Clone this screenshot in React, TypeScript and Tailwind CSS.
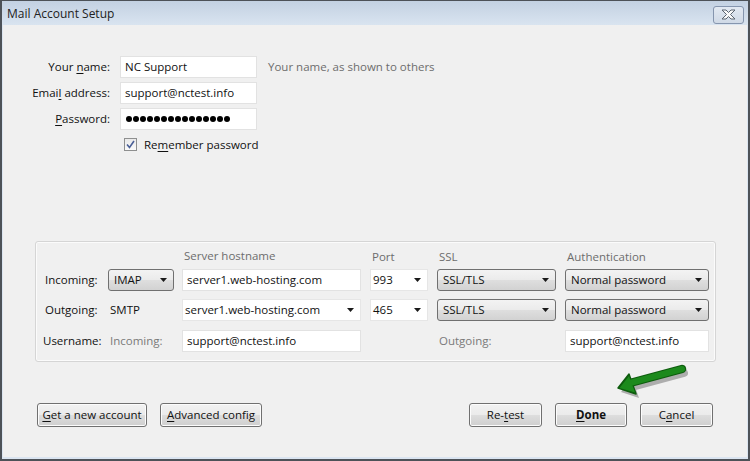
import type { ReactNode } from "react";

const FONT = { fontFamily: '"Open Sans", "Noto Sans", sans-serif' };

function Arrow() {
  return (
    <svg width="7" height="4" viewBox="0 0 7 4" className="shrink-0">
      <path d="M0 0 H7 L3.5 4 Z" fill="#1a1a1a" />
    </svg>
  );
}

function Select({ value, width }: { value: string; width: string }) {
  return (
    <div
      className={`${width} h-[22px] flex items-center justify-between pl-[5px] pr-[6px] rounded-[3px] border border-[#707070] bg-[linear-gradient(#f3f3f3_0%,#ebebeb_48%,#dedede_52%,#d2d2d2_100%)] text-[#111]`}
    >
      <span>{value}</span>
      <Arrow />
    </div>
  );
}

function Combo({ value, width }: { value: string; width: string }) {
  return (
    <div className={`${width} h-[22px] flex items-center justify-between pl-[2px] pr-[6px] bg-white border border-[#e6e6e6] text-[#111]`}>
      <span>{value}</span>
      <Arrow />
    </div>
  );
}

function Input({ children, width }: { children: ReactNode; width: string }) {
  return (
    <div className={`${width} h-[22px] flex items-center px-[4px] bg-white border border-[#e2e2e2] text-[#111]`}>
      {children}
    </div>
  );
}

function Button({ children, width, bold }: { children: ReactNode; width: string; bold?: boolean }) {
  return (
    <div
      className={`${width} h-[24px] flex items-center justify-center rounded-[3px] border border-[#707070] bg-[linear-gradient(#f2f2f2_0%,#ebebeb_48%,#dddddd_52%,#cfcfcf_100%)] shadow-[inset_0_0_0_1px_#fcfcfc] text-[#111] ${bold ? "font-bold" : ""}`}
    >
      {children}
    </div>
  );
}

function U({ children }: { children: ReactNode }) {
  return <span className="underline underline-offset-[2px]">{children}</span>;
}

export default function App() {
  return (
    <div
      style={FONT}
      className="relative w-[750px] h-[461px] flex flex-col text-[11.5px] leading-none border-l-2 border-r-2 border-b-2 border-t border-[#4d5258] bg-[#dbe5f1]"
    >
      {/* title bar */}
      <div className="h-[24px] shrink-0 flex items-center justify-between pl-[5px] pr-[4px] bg-[linear-gradient(#c3d1e2,#d9e4f0)]">
        <span className="text-[12px] text-[#222] pt-[2px]">Mail Account Setup</span>
        <div className="w-[31px] h-[18px] mt-[3px] rounded-[3px] border border-[#8595ae] bg-[linear-gradient(#e2e9f2,#cfd9e6)] flex items-center justify-center">
          <svg width="15" height="11" viewBox="0 0 15 11">
            <path
              d="M1 1 H5 L7.5 3.5 L10 1 H14 L9.5 5.5 L14 10 H10 L7.5 7.5 L5 10 H1 L5.5 5.5 Z"
              fill="#fafafa"
              stroke="#5b6470"
              strokeWidth="1"
              strokeLinejoin="round"
            />
          </svg>
        </div>
      </div>

      {/* content */}
      <div className="flex-1 flex flex-col bg-[#f0f0f0] mx-[1px] mb-[2px]">
        {/* identity fields */}
        <div className="mt-[31px] grid grid-cols-[107px_137px_auto] gap-x-[10px] gap-y-[4px] items-center">
          <div className="text-right text-[#111]">
            Your <U>n</U>ame:
          </div>
          <Input width="w-[137px]">NC Support</Input>
          <div className="text-[#6d6d6d] pl-[1px]">Your name, as shown to others</div>

          <div className="text-right text-[#111]">
            Emai<U>l</U> address:
          </div>
          <Input width="w-[137px]">support@nctest.info</Input>
          <div />

          <div className="text-right text-[#111]">
            <U>P</U>assword:
          </div>
          <Input width="w-[137px]">
            <div className="flex gap-[1px] pl-[1px]">
              {Array.from({ length: 15 }).map((_, i) => (
                <span key={i} className="w-[6px] h-[6px] rounded-full bg-black" />
              ))}
            </div>
          </Input>
          <div />
        </div>

        <div className="mt-[8px] ml-[121px] flex items-center gap-[7px]">
          <div className="w-[13px] h-[13px] border border-[#8e8f8f] bg-[linear-gradient(#e9e9e9,#fafafa)] flex items-center justify-center">
            <svg width="9" height="9" viewBox="0 0 9 9">
              <path d="M1 4.5 L3.5 7.5 L8 1" fill="none" stroke="#4a5f97" strokeWidth="1.6" />
            </svg>
          </div>
          <span className="text-[#111]">
            Re<U>m</U>ember password
          </span>
        </div>

        {/* server settings panel */}
        <div className="mt-[90px] ml-[32px] w-[681px] h-[121px] rounded-[3px] border border-[#d5d5d5] shadow-[inset_0_0_0_1px_#fbfbfb] pl-[7px] pr-[6px] pt-[8px]">
          <div className="grid grid-cols-[65px_74px_188px_67px_128px_144px] items-center">
            <div />
            <div />
            <div className="pl-[2px] text-[#6d6d6d] h-[14px]">Server hostname</div>
            <div className="pl-[2px] text-[#6d6d6d]">Port</div>
            <div className="pl-[2px] text-[#6d6d6d]">SSL</div>
            <div className="pl-[2px] text-[#6d6d6d]">Authentication</div>
          </div>

          <div className="mt-[5px] grid grid-cols-[65px_74px_188px_67px_128px_144px] items-center">
            <div className="pl-[2px] text-[#111]">Incoming:</div>
            <Select value="IMAP" width="w-[66px]" />
            <Input width="w-[179px]">server1.web-hosting.com</Input>
            <Combo value="993" width="w-[58px]" />
            <Select value="SSL/TLS" width="w-[119px]" />
            <Select value="Normal password" width="w-[144px]" />
          </div>

          <div className="mt-[8px] grid grid-cols-[65px_74px_188px_67px_128px_144px] items-center">
            <div className="pl-[2px] text-[#111]">Outgoing:</div>
            <div className="pl-[2px] text-[#111]">SMTP</div>
            <Combo value="server1.web-hosting.com" width="w-[179px]" />
            <Combo value="465" width="w-[58px]" />
            <Select value="SSL/TLS" width="w-[119px]" />
            <Select value="Normal password" width="w-[144px]" />
          </div>

          <div className="mt-[9px] grid grid-cols-[65px_74px_188px_67px_128px_144px] items-center">
            <div className="text-[#111]">Username:</div>
            <div className="pl-[2px] text-[#7a7a7a]">Incoming:</div>
            <Input width="w-[179px]">support@nctest.info</Input>
            <div />
            <div className="pl-[2px] text-[#7a7a7a]">Outgoing:</div>
            <Input width="w-[144px]">support@nctest.info</Input>
          </div>
        </div>

        {/* buttons */}
        <div className="mt-[41px] ml-[34px] mr-[34px] flex items-center">
          <Button width="w-[110px]">
            <span>
              <U>G</U>et a new account
            </span>
          </Button>
          <div className="w-[13px]" />
          <Button width="w-[102px]">
            <span>
              <U>A</U>dvanced config
            </span>
          </Button>
          <div className="flex-1" />
          <Button width="w-[73px]">
            <span>
              Re-<U>t</U>est
            </span>
          </Button>
          <div className="w-[13px]" />
          <Button width="w-[72px]" bold>
            <span>
              <U>D</U>one
            </span>
          </Button>
          <div className="w-[13px]" />
          <Button width="w-[73px]">
            <span>
              C<U>a</U>ncel
            </span>
          </Button>
        </div>
      </div>

      {/* green annotation arrow */}
      <svg
        className="absolute left-[608px] top-[360px]"
        width="86"
        height="40"
        viewBox="0 0 86 40"
      >
        <g transform="translate(2 3)" opacity="0.35">
          <path d="M20 23 L72 9" stroke="#333" strokeWidth="8" strokeLinecap="round" />
          <path d="M9 28 L20 14 L27 34 Z" fill="#333" />
        </g>
        <path d="M20 22 L72 8" stroke="#0e5c0e" strokeWidth="8.5" strokeLinecap="round" />
        <path d="M8 27 L19 13 L26 33 Z" fill="#0e5c0e" stroke="#0e5c0e" strokeWidth="1.5" strokeLinejoin="round" />
        <path d="M20 22 L72 8" stroke="#1c8a1c" strokeWidth="6" strokeLinecap="round" />
        <path d="M9.5 27 L19 15 L25 31.5 Z" fill="#1c8a1c" />
      </svg>
    </div>
  );
}
